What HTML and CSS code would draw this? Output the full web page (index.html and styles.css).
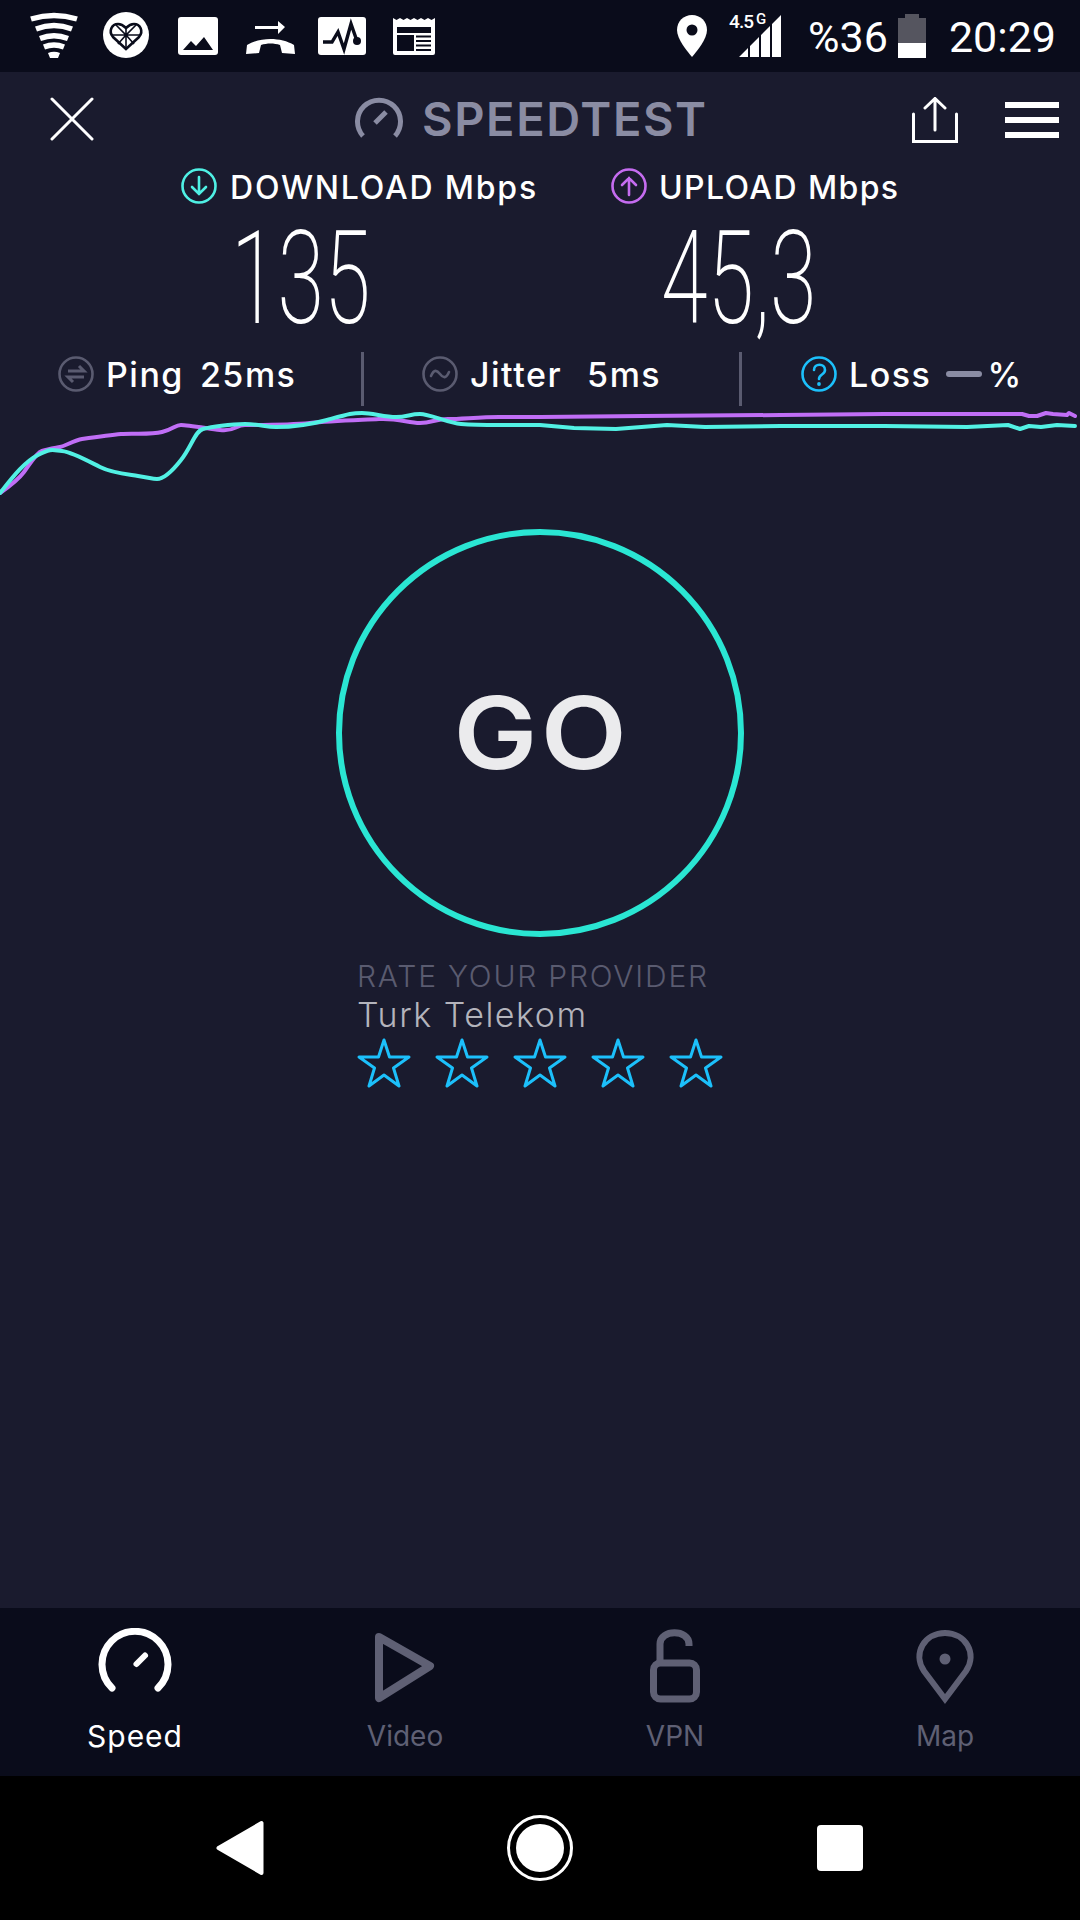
FILE: index.html
```html
<!DOCTYPE html>
<html lang="en">
<head>
<meta charset="utf-8">
<title>Speedtest</title>
<link rel="stylesheet" href="styles.css">
</head>
<body>
<div class="screen">
  <div class="status">
    <svg class="si si-wifi" viewBox="0 0 48 46"><g fill="none" stroke="#fff" stroke-width="5.4"><path d="M1 7Q24 0 47 7"/><path d="M6 17Q24 10 42 17"/><path d="M10 26.500Q24 21 38 26.500"/><path d="M14 35Q24 31 34 35"/></g><path d="M18 41Q24 38.500 30 41L28 46H20Z" fill="#fff"/></svg>
    <svg class="si si-heart" viewBox="0 0 46 46"><circle cx="23" cy="23" r="23" fill="#fff"/><path d="M23 37L10 25C5 19 9 12 15 12C19 12 21 14 23 16C25 14 27 12 31 12C37 12 41 19 36 25Z" fill="none" stroke="#0a0c1b" stroke-width="2.600"/><path d="M23 16V37M8 23H38M13 13L23 23L33 13M15 32L23 23L31 32" fill="none" stroke="#0a0c1b" stroke-width="1.600"/></svg>
    <svg class="si si-image" viewBox="0 0 40 38"><rect width="40" height="38" rx="3" fill="#fff"/><path d="M5 33L13 24L18 29L26 20L35 33Z" fill="#0a0c1b"/></svg>
    <svg class="si si-call" viewBox="0 0 49 36"><path d="M9 8H32V3L39 9L32 16V11H9Z" fill="#fff"/><path d="M0 36L1 27C14 19 35 19 48 27L49 36L36 35L34 27C28 25 21 25 15 27L13 35Z" fill="#fff"/></svg>
    <svg class="si si-pulse" viewBox="0 0 48 38"><rect width="48" height="38" rx="3" fill="#fff"/><path d="M5 25H14L20 15L26 32L33 7L39 24" fill="none" stroke="#0a0c1b" stroke-width="3.400"/><circle cx="39" cy="24" r="4" fill="#0a0c1b"/></svg>
    <svg class="si si-news" viewBox="0 0 42 38"><path d="M0 1L3.500 3L7 1L10.500 3L14 1L17.500 3L21 1L24.500 3L28 1L31.500 3L35 1L38.500 3L42 1V36Q42 38 40 38H2Q0 38 0 36Z" fill="#fff"/><path d="M4 10H38V16H4ZM4 18H21V34H4Z" fill="#0a0c1b"/><path d="M23 19.500H38M23 24H38M23 28.500H38M23 33H38" stroke="#0a0c1b" stroke-width="2"/></svg>
    <div class="status-right">
      <svg class="si si-pin" viewBox="0 0 30 42"><path d="M15 0C6.500 0 0 6.500 0 15C0 24 10 36 15 42C20 36 30 24 30 15C30 6.500 23.500 0 15 0Z" fill="#fff"/><circle cx="15" cy="15" r="5.500" fill="#0a0c1b"/></svg>
      <div class="signal">
        <span class="net"><span>4.5</span><span class="net-g">G</span></span>
        <svg class="si si-bars" viewBox="0 0 42 42"><path d="M0 42L9 33V42ZM11 31L20 22V42H11ZM22 20L31 11V42H22ZM33 9L42 0V42H33Z" fill="#fff"/></svg>
      </div>
      <span class="pct">%36</span>
      <svg class="si si-batt" viewBox="0 0 28 44"><path d="M7 0H21V4H28V44H0V4H7Z" fill="#55555f"/><path d="M0 29H28V44H0Z" fill="#fff"/></svg>
      <span class="clock">20:29</span>
    </div>
  </div>

  <main class="main">
    <header class="topbar">
      <svg class="close" viewBox="0 0 44 44"><path d="M2 2L42 42M42 2L2 42" stroke="#fff" stroke-width="3" stroke-linecap="round"/></svg>
      <div class="brand">
        <svg class="brand-gauge" viewBox="0 0 48 42"><path d="M8 39A21.500 21.500 0 1 1 40 39" fill="none" stroke="#8a8ca3" stroke-width="5"/><path d="M20 26L31 15" stroke="#8a8ca3" stroke-width="5"/></svg>
        <span class="brand-name">SPEEDTEST</span>
      </div>
      <svg class="share" viewBox="0 0 46 46"><path d="M1.500 17V44.500H44.500V17" fill="none" stroke="#fff" stroke-width="3" stroke-linecap="round"/><path d="M23 33V2M13 11L23 1.500L33 11" fill="none" stroke="#fff" stroke-width="3" stroke-linecap="round"/></svg>
      <div class="menu"><i></i><i></i><i></i></div>
    </header>

    <section class="speeds">
      <div class="speed speed-down">
        <div class="speed-label">
          <svg class="ic-round" viewBox="0 0 36 36"><circle cx="18" cy="18" r="16.500" fill="none" stroke="#4ff0e4" stroke-width="2.600"/><path d="M18 9V26M11 19L18 26L25 19" fill="none" stroke="#4ff0e4" stroke-width="2.600" stroke-linecap="round"/></svg>
          <span>DOWNLOAD Mbps</span>
        </div>
        <div class="speed-value value-down"><span>135</span></div>
      </div>
      <div class="speed speed-up">
        <div class="speed-label">
          <svg class="ic-round" viewBox="0 0 36 36"><circle cx="18" cy="18" r="16.500" fill="none" stroke="#c56cf0" stroke-width="2.600"/><path d="M18 27V10M11 17L18 10L25 17" fill="none" stroke="#c56cf0" stroke-width="2.600" stroke-linecap="round"/></svg>
          <span>UPLOAD Mbps</span>
        </div>
        <div class="speed-value value-up"><span>45,3</span></div>
      </div>
    </section>

    <section class="metrics">
      <div class="metric metric-ping">
        <svg class="ic-round" viewBox="0 0 36 36"><circle cx="18" cy="18" r="16.500" fill="none" stroke="#5a5b70" stroke-width="2.600"/><path d="M10 15H26L21 10M26 21H10L15 26" fill="none" stroke="#5a5b70" stroke-width="3"/></svg>
        <span class="m-name">Ping</span><span class="m-val">25ms</span>
      </div>
      <div class="metric metric-jitter">
        <svg class="ic-round" viewBox="0 0 36 36"><circle cx="18" cy="18" r="16.500" fill="none" stroke="#5a5b70" stroke-width="2.600"/><path d="M9 20C12 13 15 14 18 18C21 22 24 23 27 16" fill="none" stroke="#5a5b70" stroke-width="2.600" stroke-linecap="round"/></svg>
        <span class="m-name">Jitter</span><span class="m-val val-jitter">5ms</span>
      </div>
      <div class="metric metric-loss">
        <svg class="ic-round" viewBox="0 0 36 36"><circle cx="18" cy="18" r="16.500" fill="none" stroke="#1cc0fb" stroke-width="2.600"/><path d="M13 14C13 7 24 7 24 14C24 19 18 18 18 23" fill="none" stroke="#1cc0fb" stroke-width="2.600" stroke-linecap="round"/><circle cx="18" cy="28" r="1.900" fill="#1cc0fb"/></svg>
        <span class="m-name">Loss</span><i class="dash"></i><span class="m-pct">%</span>
      </div>
    </section>

    <svg class="graph" viewBox="0 406 1080 94">
      <path class="line-up" d="M0 493C10 486 18 480 24 472S36 453 42 451S55 448 60 447S75 440 82 439S110 435 121 434S150 435 162 432S175 425 181 425S205 428 220 430S235 425 245 425S290 425 310 423S360 420 379 419S408 423 420 423S435 419 448 419S480 417 499 417L540 417L643 416L781 415L884 414L1022 414L1029 416L1037 416L1046 413L1053 414L1067 415L1069 413L1075 416"/>
      <path class="line-down" d="M0 493C12 478 24 462 38 455S52 450 62 451S88 461 100 467S125 474 138 476S152 479 157 479S170 474 181 460S195 431 203 429S230 424 245 424S265 427 276 427S305 426 327 420S352 413 362 413S385 417 396 417S410 414 420 414S448 423 461 424S480 425 499 425L540 425L574 428L616 429L667 425L705 427L781 426L884 426L967 427L1008 425L1020 429L1029 426L1041 427L1057 425L1075 426"/>
    </svg>

    <div class="go"><span>GO</span></div>

    <section class="rate">
      <div class="rate-title">RATE YOUR PROVIDER</div>
      <div class="rate-name">Turk Telekom</div>
      <div class="stars">
        <svg class="star" viewBox="0 0 54 50"><path d="M27 2L32.500 19H52L36.500 30L42 48L27 37L12 48L17.500 30L2 19H21.500Z"/></svg>
        <svg class="star" viewBox="0 0 54 50"><path d="M27 2L32.500 19H52L36.500 30L42 48L27 37L12 48L17.500 30L2 19H21.500Z"/></svg>
        <svg class="star" viewBox="0 0 54 50"><path d="M27 2L32.500 19H52L36.500 30L42 48L27 37L12 48L17.500 30L2 19H21.500Z"/></svg>
        <svg class="star" viewBox="0 0 54 50"><path d="M27 2L32.500 19H52L36.500 30L42 48L27 37L12 48L17.500 30L2 19H21.500Z"/></svg>
        <svg class="star" viewBox="0 0 54 50"><path d="M27 2L32.500 19H52L36.500 30L42 48L27 37L12 48L17.500 30L2 19H21.500Z"/></svg>
      </div>
    </section>
  </main>

  <nav class="tabs">
    <div class="tab tab-on">
      <svg class="tab-ic" viewBox="0 0 80 76"><path d="M17 60A33 33 0 1 1 63 60" fill="none" stroke="#fff" stroke-width="7" stroke-linecap="round"/><path d="M41.500 36L50 27.500" stroke="#fff" stroke-width="6" stroke-linecap="round"/></svg>
      <span>Speed</span>
    </div>
    <div class="tab">
      <svg class="tab-ic" viewBox="0 0 80 76"><path d="M14 9L65 38L14 70Z" fill="none" stroke="#5f6074" stroke-width="8" stroke-linejoin="round"/></svg>
      <span>Video</span>
    </div>
    <div class="tab">
      <svg class="tab-ic" viewBox="0 0 80 76"><path d="M25 35V16C25 1 54 1 54 16V18" fill="none" stroke="#5f6074" stroke-width="7"/><rect x="18.500" y="35" width="43" height="36" rx="7" fill="none" stroke="#5f6074" stroke-width="7"/></svg>
      <span>VPN</span>
    </div>
    <div class="tab">
      <svg class="tab-ic" viewBox="0 0 80 76"><path d="M40 71L19 43C7 25 20 5 40 5C60 5 73 25 61 43Z" fill="none" stroke="#5f6074" stroke-width="6"/><circle cx="40" cy="31" r="5.500" fill="#5f6074"/></svg>
      <span>Map</span>
    </div>
  </nav>

  <div class="sysnav">
    <svg class="nav-back" viewBox="0 0 48 56"><path d="M45.500 3V53L2.500 28Z" fill="#fff" stroke="#fff" stroke-width="4" stroke-linejoin="round"/></svg>
    <div class="nav-home"><i></i></div>
    <div class="nav-recent"></div>
  </div>
</div>
</body>
</html>
```
FILE: styles.css
```css
* { box-sizing: border-box; }
html, body { margin: 0; padding: 0; }
body { width: 1080px; height: 1920px; background: #000; font-family: Inter, "Noto Sans", sans-serif; overflow: hidden; }
.screen { width: 1080px; height: 1920px; display: flex; flex-direction: column; background: #1a1b2e; color: #fff; }
svg { display: block; flex: none; }

.status { height: 72px; flex: none; background: #0a0c1b; display: flex; align-items: flex-start; padding-left: 30px; }
.si-wifi { width: 48px; height: 46px; margin: 12px 25px 0 0; }
.si-heart { width: 46px; height: 46px; margin: 12px 29px 0 0; }
.si-image { width: 40px; height: 38px; margin: 17px 28px 0 0; }
.si-call { width: 49px; height: 36px; margin: 18px 23px 0 0; }
.si-pulse { width: 48px; height: 38px; margin: 17px 27px 0 0; }
.si-news { width: 42px; height: 38px; margin: 17px 0 0 0; }
.status-right { margin-left: auto; display: flex; align-items: flex-start; padding-right: 24px; font-family: Roboto, sans-serif; }
.si-pin { width: 30px; height: 42px; margin: 15px 22px 0 0; }
.signal { width: 52px; height: 72px; position: relative; margin-right: 27px; }
.si-bars { width: 42px; height: 42px; position: absolute; left: 10px; top: 15px; }
.net { position: absolute; left: 0; top: 12px; font-size: 19px; line-height: 19px; font-weight: 500; letter-spacing: -1px; display: flex; gap: 3px; }
.net-g { font-size: 15px; line-height: 15px; }
.pct, .clock { font-size: 43px; line-height: 72px; margin-top: 1px; }
.pct { margin-right: 10px; }
.si-batt { width: 28px; height: 44px; margin: 14px 23px 0 0; }

.main { flex: 1; display: flex; flex-direction: column; min-height: 0; }

.topbar { height: 88px; flex: none; display: flex; align-items: flex-start; padding: 25px 21px 0 50px; }
.close { width: 44px; height: 44px; }
.brand { display: flex; align-items: center; margin-left: 261px; height: 42px; }
.brand-gauge { width: 48px; height: 42px; margin-right: 19px; }
.brand-name { font-size: 47px; line-height: 42px; font-weight: 600; color: #8a8ca3; letter-spacing: 1.6px; padding-top: 2px; }
.share { width: 46px; height: 46px; margin-left: auto; }
.menu { width: 54px; height: 36px; margin: 5px 0 0 47px; display: flex; flex-direction: column; justify-content: space-between; }
.menu i { display: block; height: 6px; background: #fff; }

.speeds { height: 192px; flex: none; display: flex; padding-left: 181px; }
.speed { display: flex; flex-direction: column; }
.speed-down { width: 430px; }
.speed-label { display: flex; align-items: center; height: 52px; font-size: 32px; line-height: 52px; font-weight: 500; letter-spacing: 1.8px; gap: 13px; }
.speed-up .speed-label { letter-spacing: 1.4px; gap: 12px; }
.speed-label span { padding-top: 4px; }
.ic-round { width: 36px; height: 36px; }
.speed-value { height: 130px; margin-top: 2px; font-family: Roboto, sans-serif; font-weight: 200; font-size: 130px; line-height: 130px; }
.speed-value span { display: inline-block; transform-origin: 0 50%; transform: scaleX(.65); white-space: nowrap; }
.value-down { padding-left: 50px; }
.value-up { padding-left: 50px; }

.metrics { height: 54px; flex: none; display: flex; }
.metric { display: flex; align-items: center; height: 54px; padding-bottom: 10px; font-size: 34px; letter-spacing: 1.5px; font-weight: 500; border-right: 3px solid #5a5b70; }
.metric-ping { width: 364px; padding-left: 58px; }
.metric-jitter { width: 378px; padding-left: 58px; }
.metric-loss { width: 338px; padding-left: 59px; border-right: none; }
.m-name { margin-left: 12px; }
.m-val { margin-left: 16px; }
.val-jitter { margin-left: 25px; }
.dash { display: block; width: 36px; height: 6px; border-radius: 3px; background: #8a8ca3; margin: 0 5px 0 15px; }

.graph { width: 1080px; height: 94px; flex: none; }
.graph path { fill: none; stroke-width: 4; stroke-linejoin: round; stroke-linecap: round; }
.line-up { stroke: #c06ef6; }
.line-down { stroke: #52f1e4; }

.go { width: 408px; height: 408px; flex: none; margin: 29px auto 0; border: 6px solid #2ae6d3; border-radius: 50%; display: flex; align-items: center; justify-content: center; }
.go span { display: block; margin-left: 3px; font-size: 100px; line-height: 100px; font-weight: 600; letter-spacing: 3px; color: #ebebed; transform: scaleX(1.12); }

.rate { margin: 21px 0 0 357px; }
.rate-title { font-size: 30px; line-height: 36px; font-weight: 300; letter-spacing: 1.8px; color: #5a5b70; }
.rate-name { font-size: 34px; line-height: 42px; font-weight: 300; letter-spacing: 1.5px; color: #b4b4bc; }
.stars { display: flex; gap: 24px; margin-top: 2px; }
.star { width: 54px; height: 50px; }
.star path { fill: none; stroke: #1cc0fb; stroke-width: 3; stroke-linejoin: round; }

.tabs { height: 168px; flex: none; background: #0a0c1b; display: grid; grid-template-columns: repeat(4, 270px); }
.tab { display: flex; flex-direction: column; align-items: center; color: #5f6074; font-size: 28px; line-height: 36px; padding-top: 20px; }
.tab-on { color: #fff; font-size: 30px; letter-spacing: 1px; }
.tab-ic { width: 80px; height: 76px; margin-bottom: 14px; }

.sysnav { height: 144px; flex: none; background: #000; display: flex; align-items: center; padding-left: 216px; }
.nav-back { width: 48px; height: 56px; }
.nav-home { width: 66px; height: 66px; margin-left: 243px; border: 3px solid #fff; border-radius: 50%; display: flex; align-items: center; justify-content: center; }
.nav-home i { display: block; width: 48px; height: 48px; border-radius: 50%; background: #fff; }
.nav-recent { width: 46px; height: 46px; margin-left: 244px; background: #fff; border-radius: 4px; }
```
